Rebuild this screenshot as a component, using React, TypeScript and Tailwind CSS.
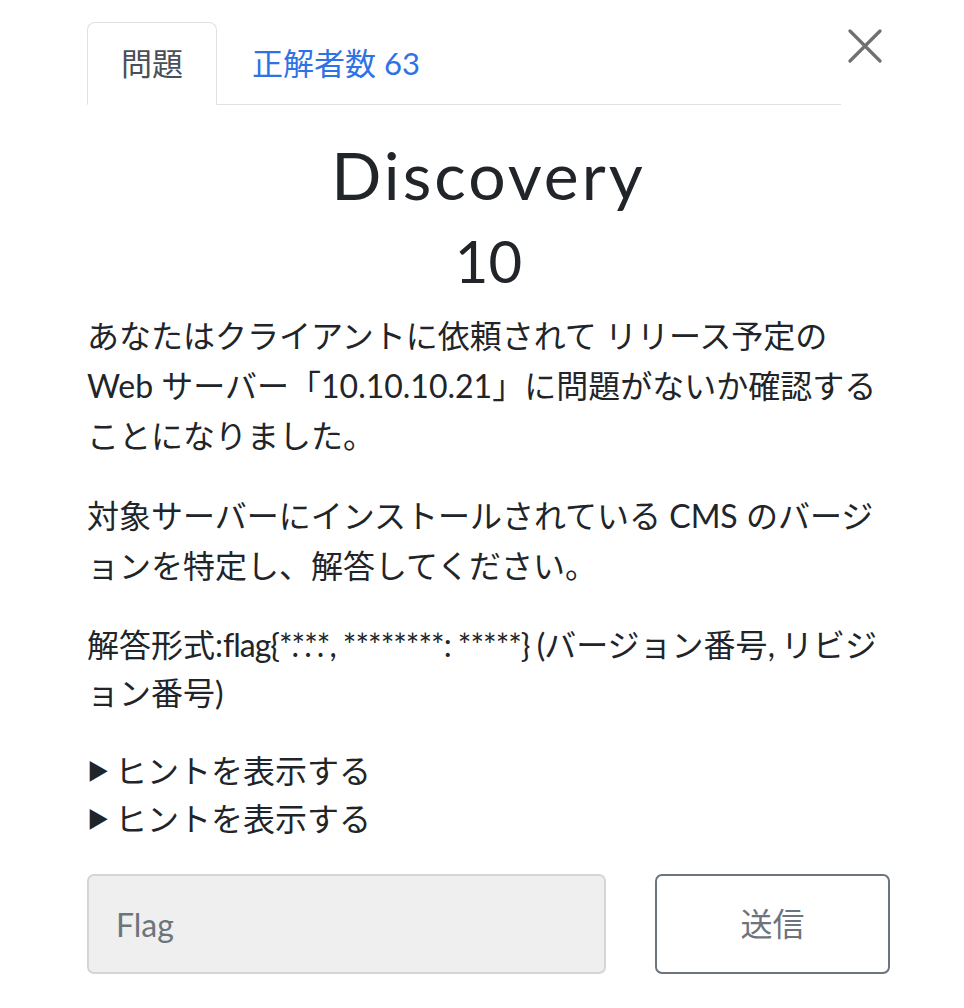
const font = { fontFamily: 'Lato, "Noto Sans CJK JP", sans-serif' };

const Dot = () => <span className="tracking-[-8px]">.</span>;

export default function App() {
  return (
    <div className="w-[964px] min-h-[1008px] bg-white text-[#212529] pl-[87px] pr-[74px] pt-[22px]" style={font}>
      {/* tabs + close */}
      <div className="flex items-start pr-[8px]">
        <div className="flex flex-1 border-b border-[#dee2e6]">
          <div className="-mb-px h-[83px] px-[33px] flex items-center rounded-t-[8px] border border-[#dee2e6] border-b-white bg-white text-[31px] text-[#495057]">
            問題
          </div>
          <div className="h-[82px] px-[35px] flex items-center text-[31px] text-[#2f72e6]">正解者数 63</div>
        </div>
        <button className="ml-[7px] mt-[7px] w-[34px] h-[34px] flex items-center justify-center text-[#707070]">
          <svg width="34" height="34" viewBox="0 0 34 34" fill="none" stroke="currentColor" strokeWidth="3.2" strokeLinecap="round">
            <path d="M2 2 L32 32 M32 2 L2 32" />
          </svg>
        </button>
      </div>

      <h1 className="mt-[32px] text-center text-[66px] leading-[1.15] tracking-[3px]">Discovery</h1>
      <div className="mt-[13px] text-center text-[58px] leading-[1.2]">10</div>

      <div className="mt-[16px] text-[32px] leading-[50px] space-y-[30px]">
        <p>
          あなたはクライアントに依頼されて リリース予定の Web サーバー「10.10.10.21」に問題がないか確認することになりました。
        </p>
        <p>対象サーバーにインストールされている CMS のバージョンを特定し、解答してください。</p>
        <p className="leading-[48px]">
          解答形式:
          <span className="tracking-[-1px]">
            flag{'{'}*<Dot />*<Dot />*<Dot />*, ********: *****{'}'} (
          </span>
          バージョン番号<span className="tracking-[-1px]">, </span>リビジョン番号)
        </p>
      </div>

      <div className="mt-[30px] text-[32px] leading-[48px]">
        <div className="flex items-center">
          <span className="text-[22px] mr-[6px]">▶</span>
          <span>ヒントを表示する</span>
        </div>
        <div className="flex items-center">
          <span className="text-[22px] mr-[6px]">▶</span>
          <span>ヒントを表示する</span>
        </div>
      </div>

      <div className="mt-[31px] flex gap-[49px]">
        <input
          className="flex-1 min-w-0 h-[100px] rounded-[7px] border-2 border-[#d3d6d9] bg-[#efefef] px-[27px] text-[32px] placeholder:text-[#6c757d] outline-none"
          placeholder="Flag"
          style={font}
        />
        <button className="w-[235px] h-[100px] rounded-[7px] border-2 border-[#6c757d] text-[32px] text-[#6c757d]">
          送信
        </button>
      </div>
    </div>
  );
}
